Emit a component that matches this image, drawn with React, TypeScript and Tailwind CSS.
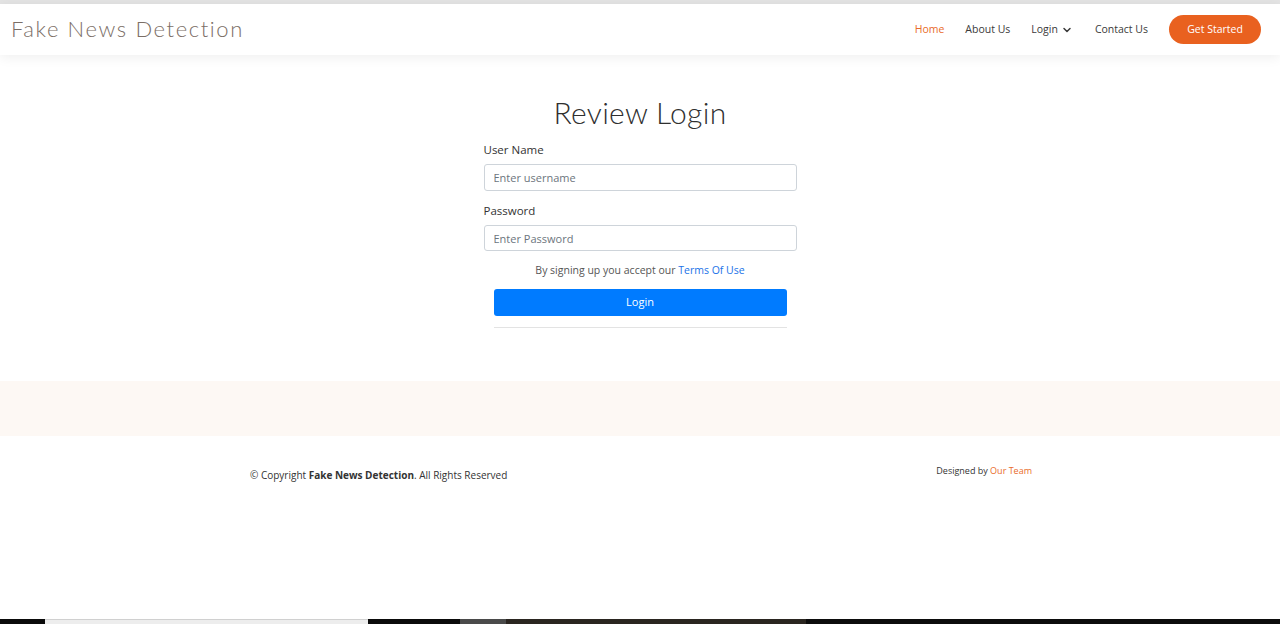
import { ChevronDown } from 'lucide-react';

const body = { fontFamily: '"Open Sans", "Noto Sans", sans-serif' };

function Header() {
  return (
    <header className="bg-white h-[51px] flex items-center justify-between pl-[11px] pr-[19px] shadow-[0_2px_12px_rgba(0,0,0,0.07)] relative z-10">
      <a
        className="text-[22px] tracking-[1.6px] text-[#7b6e66] font-light -mt-[2px]"
        style={{ fontFamily: '"Lato", "Open Sans", sans-serif' }}
      >
        Fake News Detection
      </a>
      <nav className="flex items-center text-[10.5px] text-[#3a3a3a]" style={body}>
        <a className="text-[#e96b2b] mr-[21px]">Home</a>
        <a className="mr-[21px]">About Us</a>
        <a className="flex items-center mr-[22px]">
          Login
          <ChevronDown className="w-3 h-3 ml-[3px]" strokeWidth={3} />
        </a>
        <a className="mr-[21px]">Contact Us</a>
        <a className="bg-[#e9611f] text-white rounded-full h-[29px] w-[92px] flex items-center justify-center">
          Get Started
        </a>
      </nav>
    </header>
  );
}

function LoginForm() {
  return (
    <section className="flex flex-col items-center pt-[42px]" style={body}>
      <h1
        className="text-[30px] leading-none text-[#2f2f2f] tracking-[0.3px] font-light"
        style={{ fontFamily: '"Lato", "Open Sans", sans-serif' }}
      >
        Review Login
      </h1>
      <form className="w-[313px] mt-[14px]">
        <label className="block text-[11.5px] text-[#333] mb-[6px]">User Name</label>
        <input
          className="w-full h-[27px] border border-[#ced4da] rounded-[3px] px-[9px] text-[11px] placeholder:text-[#6c757d] outline-none"
          placeholder="Enter username"
        />
        <label className="block text-[11.5px] text-[#333] mt-[11px] mb-[5px]">Password</label>
        <input
          type="password"
          className="w-full h-[26px] border border-[#ced4da] rounded-[3px] px-[9px] text-[11px] placeholder:text-[#6c757d] outline-none"
          placeholder="Enter Password"
        />
        <p className="text-center text-[10.5px] text-[#555] mt-[12px]">
          By signing up you accept our <a className="text-[#1a73e8]">Terms Of Use</a>
        </p>
        <div className="px-[10px] mt-[9px]">
          <button
            type="button"
            className="w-full h-[27px] bg-[#007bff] text-white text-[11px] rounded-[3px]"
          >
            Login
          </button>
          <hr className="mt-[11px] border-[#e3e3e3]" />
        </div>
      </form>
    </section>
  );
}

function Footer() {
  return (
    <footer style={body}>
      <div className="h-[55px] bg-[#fdf8f4] mt-[53px]" />
      <div className="flex justify-between pl-[250px] pr-[248px] pt-[29px]">
        <p className="text-[10px] text-[#333] mt-[3px]">
          © Copyright <strong className="font-bold">Fake News Detection</strong>. All Rights Reserved
        </p>
        <p className="text-[9px] text-[#333] -mt-[1px]">
          Designed by <a className="text-[#e96b2b]">Our Team</a>
        </p>
      </div>
    </footer>
  );
}

export default function App() {
  return (
    <div className="h-[624px] flex flex-col bg-white overflow-hidden">
      <div className="h-[4px] bg-[#e4e4e4] shrink-0" />
      <Header />
      <main className="flex-1">
        <LoginForm />
        <Footer />
      </main>
      {/* Taskbar edge at bottom of screenshot */}
      <div className="h-[5px] flex shrink-0">
        <div className="w-[45px] bg-[#0a0a0a]" />
        <div className="w-[323px] bg-[#ededed] border-t border-[#d0d0d0]" />
        <div className="w-[92px] bg-[#0a0a0a]" />
        <div className="w-[46px] bg-[#4a4a4a]" />
        <div className="w-[300px] bg-[#2a2520]" />
        <div className="flex-1 bg-[#0c0c0c]" />
      </div>
    </div>
  );
}
